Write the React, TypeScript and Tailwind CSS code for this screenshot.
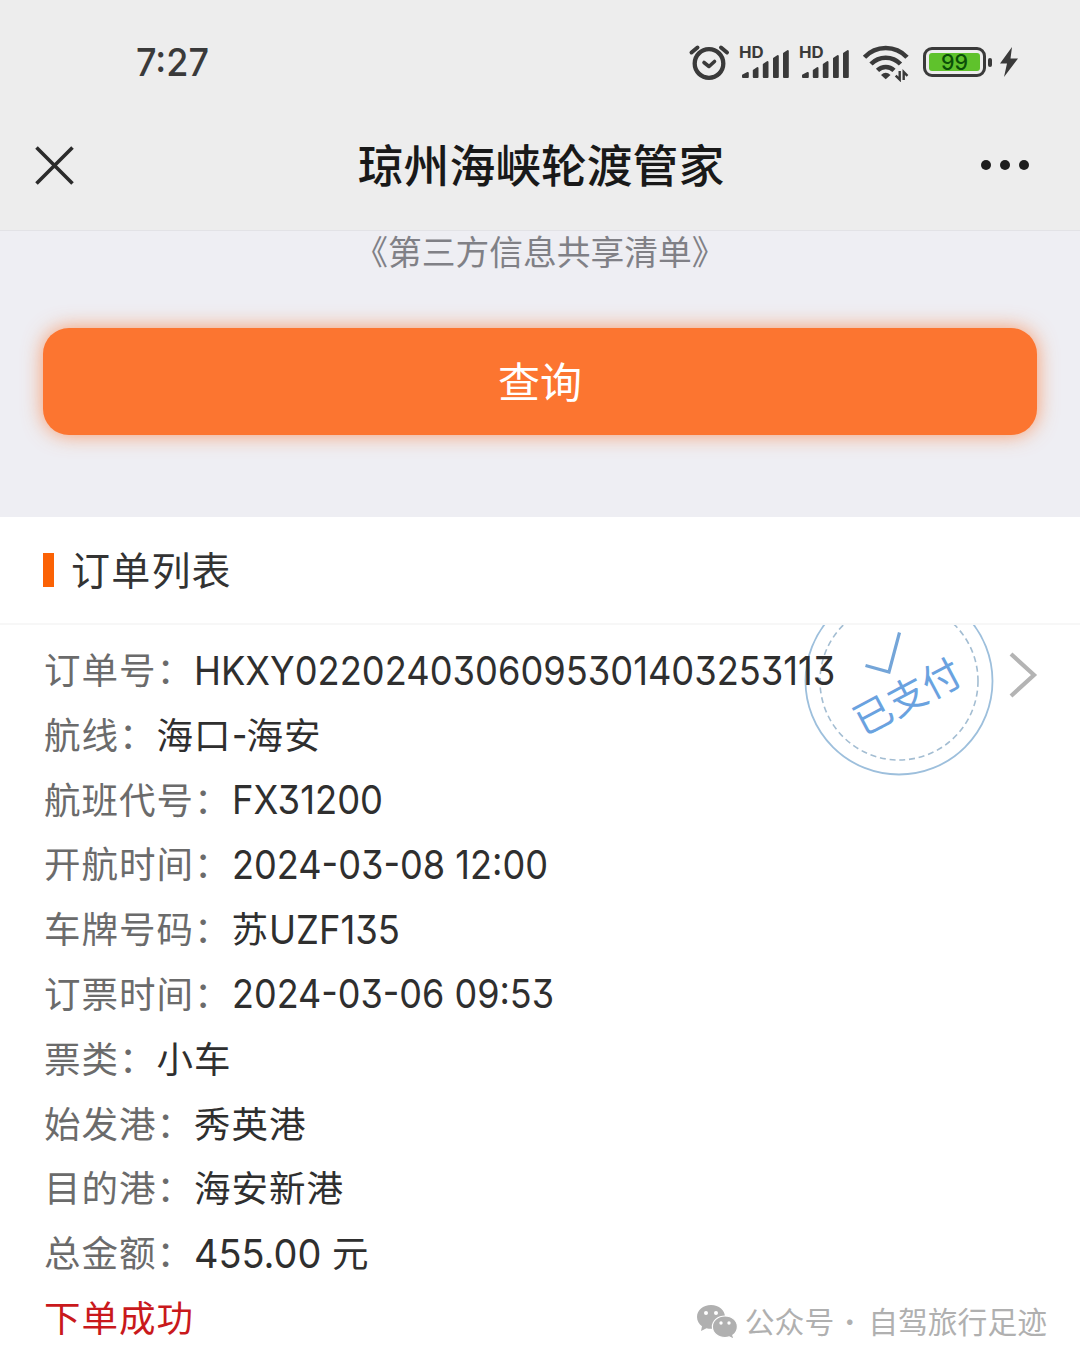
import React from "react";

const cjk = "font-['Noto_Sans_CJK_SC',sans-serif]";
const latin = "font-['Inter','Noto_Sans_CJK_SC',sans-serif] [font-feature-settings:'cv09']";

type Part = { text: string; className?: string };
type Row = { label: string; parts: Part[] };

const rows: Row[] = [
  { label: "订单号：", parts: [{ text: "HKXY0220240306095301403253113", className: "w-[641px]" }] },
  { label: "航线：", parts: [{ text: "海口" }, { text: "-", className: "w-[15px]" }, { text: "海安" }] },
  { label: "航班代号：", parts: [{ text: "FX31200", className: "w-[151px]" }] },
  { label: "开航时间：", parts: [{ text: "2024-03-08 12:00", className: "w-[316px]" }] },
  { label: "车牌号码：", parts: [{ text: "苏" }, { text: "UZF135", className: "w-[131px]" }] },
  { label: "订票时间：", parts: [{ text: "2024-03-06 09:53", className: "w-[322px]" }] },
  { label: "票类：", parts: [{ text: "小车" }] },
  { label: "始发港：", parts: [{ text: "秀英港" }] },
  { label: "目的港：", parts: [{ text: "海安新港" }] },
  { label: "总金额：", parts: [{ text: "455.00", className: "mr-[11px] w-[127px]" }, { text: "元" }] },
];

function AlarmIcon() {
  return (
    <svg width="42" height="40" viewBox="0 0 42 40" fill="none" stroke="#3a3a3a" strokeLinecap="round" strokeLinejoin="round">
      <circle cx="21" cy="21.500" r="14.300" strokeWidth="4.300" />
      <path d="M3.500 10.500 9.500 5.500M39 10.500 33 5.500" strokeWidth="4" />
      <path d="M16 20.500 21 24.500 26.500 19.500" strokeWidth="3.600" />
    </svg>
  );
}

function SignalIcon() {
  return (
    <div className="relative h-[40px] w-[52px]">
      <span className="absolute left-[1px] top-[2px] origin-left scale-x-105 font-['Inter',sans-serif] text-[16px] font-bold leading-[17px] text-[#3a3a3a]">HD</span>
      <svg className="absolute inset-0" width="52" height="40" viewBox="0 0 52 40" fill="#3a3a3a" stroke="#3a3a3a" strokeWidth="2" strokeLinejoin="round">
        <path d="M5 35V33.500L9.800 31V35Z" />
        <path d="M15.800 35V28.500L19.500 26V35Z" />
        <path d="M25.800 35V22.500L29.500 20V35Z" />
        <path d="M36 35V16.500L39.800 14V35Z" />
        <path d="M46 35V11.500L49.800 9V35Z" />
      </svg>
    </div>
  );
}

function WifiIcon() {
  return (
    <svg width="48" height="40" viewBox="0 0 48 40" fill="none" stroke="#3a3a3a" strokeWidth="4.600">
      <path d="M2.500 15.200A29 29 0 0 1 45 15.200" />
      <path d="M9 22A20.500 20.500 0 0 1 38.500 22" />
      <path d="M15.500 28.300A12 12 0 0 1 32 28.300" />
      <path d="M19 33Q23.700 28.500 28.500 33L23.700 37.300Z" fill="#3a3a3a" stroke="none" />
      <path d="M37.700 29V37.500L33.700 33.600M41.700 38V30L45.500 33.800" strokeWidth="2.400" />
    </svg>
  );
}

function Battery() {
  return (
    <div className="flex items-center">
      <div className="h-[30px] w-[63px] rounded-[9px] border-[3.500px] border-[#3a3a3a] p-[3px]">
        <div className="flex h-full items-center justify-center rounded-[3px] bg-[#5fc22c]">
          <span className="translate-y-px font-['Inter',sans-serif] text-[21.500px] font-medium leading-none text-[#0b4f08]">99</span>
        </div>
      </div>
      <div className="ml-[2px] h-[9px] w-[4px] rounded-[2px] bg-[#3a3a3a]" />
    </div>
  );
}

function PaidStamp() {
  return (
    <div className="pointer-events-none absolute left-[800px] top-0 h-[155px] w-[200px] overflow-hidden">
      <svg width="200" height="155" viewBox="800 625 200 155" fill="none">
        <circle cx="899" cy="681" r="93.500" stroke="#9dbfdc" strokeWidth="1.800" />
        <circle cx="899" cy="681" r="79" stroke="#a3bdd2" strokeWidth="1.600" strokeDasharray="6 3.800" />
        <path d="M865.500 665.500 889 672 899.500 632.500" stroke="#74a5d8" strokeWidth="3.200" />
      </svg>
      <span className={`${cjk} absolute left-[48px] top-[41px] -rotate-[28deg] whitespace-nowrap text-[38.500px] font-normal leading-[56px] text-[#6aa2df]`}>
        已支付
      </span>
    </div>
  );
}

function Latin({ text, className }: Part) {
  const ref = React.useRef<HTMLSpanElement>(null);
  const [scale, setScale] = React.useState(1);
  React.useLayoutEffect(() => {
    const el = ref.current;
    if (el && el.parentElement) setScale(el.parentElement.offsetWidth / el.offsetWidth);
  }, []);
  return (
    <span className={`inline-block translate-y-px whitespace-nowrap ${className}`}>
      <span ref={ref} className={`${latin} inline-block origin-left text-[40px] tracking-normal`} style={{ transform: `scaleX(${scale})` }}>
        {text}
      </span>
    </span>
  );
}

export default function App() {
  return (
    <div className={`${cjk} flex h-[1365px] w-[1080px] flex-col overflow-hidden bg-white`} lang="zh-CN">
      <header className="h-[231px] shrink-0 border-b border-[#e2e2e6] bg-[#ededed]">
        <div className="flex h-[124px] items-center justify-between pl-[136px] pr-[61px]">
          <span className="origin-left scale-x-[0.935] font-['Inter',sans-serif] text-[38.500px] font-medium leading-none text-[#3a3a3a]">7:27</span>
          <div className="flex items-center">
            <AlarmIcon />
            <div className="ml-[8px]"><SignalIcon /></div>
            <div className="ml-[8px]"><SignalIcon /></div>
            <div className="ml-[12px]"><WifiIcon /></div>
            <div className="ml-[13px]"><Battery /></div>
            <svg className="ml-[7px]" width="20" height="32" viewBox="0 0 20 32" fill="#3a3a3a">
              <path d="M13 1 1 17.500H8L5 31 19 12.500H11.500Z" />
            </svg>
          </div>
        </div>
        <div className="flex h-[82px] items-center justify-between pl-[34px] pr-[51px]">
          <svg width="40" height="40" viewBox="0 0 40 40" fill="none" stroke="#2b2b2b" strokeWidth="3.600">
            <path d="M2.500 2.500 38.500 38.500M38.500 2.500 2.500 38.500" />
          </svg>
          <h1 className="ml-[26px] -translate-y-px text-[45.800px] font-medium leading-none text-[#191919]">琼州海峡轮渡管家</h1>
          <div className="ml-[-1px] flex gap-[9px]">
            <i className="size-[10px] rounded-full bg-[#1e1e1e]" />
            <i className="size-[10px] rounded-full bg-[#1e1e1e]" />
            <i className="size-[10px] rounded-full bg-[#1e1e1e]" />
          </div>
        </div>
      </header>

      <section className="h-[286px] shrink-0 bg-[#eeeef3] px-[43px]">
        <p className="h-[97px] text-center text-[33.750px] leading-[39px] text-[#808086]">《第三方信息共享清单》</p>
        <button className="flex h-[107px] w-full items-center justify-center rounded-[26px] bg-[#fc7530] pb-[4px] text-[42px] text-white shadow-[0_0_20px_#fc7530b0]">
          查询
        </button>
      </section>

      <div className="flex h-[108px] shrink-0 items-center border-b-2 border-[#f7f7f7] pl-[43px]">
        <span className="h-[34px] w-[11px] bg-[#fb6205]" />
        <h2 className="ml-[17px] -translate-y-[2px] text-[39px] leading-none tracking-[1.200px] text-[#333333]">订单列表</h2>
      </div>

      <main className="relative flex-1 pl-[44px] pt-[12px]">
        <PaidStamp />
        <div className="relative">
          {rows.map((row) => (
            <div key={row.label} className="flex h-[64.800px] items-center text-[36.500px] leading-[64.800px] tracking-[1px] text-[#2f2f2f]">
              <span className="text-[#6b6b6b]">{row.label}</span>
              {row.parts.map((p, i) =>
                p.className ? <Latin key={i} {...p} /> : <span key={i}>{p.text}</span>
              )}
            </div>
          ))}
          <div className="flex h-[64.800px] items-center justify-between pr-[33px]">
            <span className="text-[36.500px] leading-[64.800px] tracking-[1px] text-[#c9191c]">下单成功</span>
            <div className="flex translate-y-[4px] items-center text-[#b0b0b0]">
              <svg className="translate-y-px" width="42" height="36" viewBox="0 0 42 36" fill="#b0b0b0">
                <path d="M15 1C7 1 1 6.200 1 13c0 4 2 7 5 9.200L5 27l5.500-2.800c1.500.4 3 .6 4.500.6 8 0 14-5.200 14-11.900S23 1 15 1Z" />
                <path d="M29 12c-7.200 0-12.600 4.700-12.600 10.700S21.800 33.500 29 33.500c1.500 0 2.900-.2 4.200-.6L38 35.200l-1.200-4c2.900-2 4.600-5.100 4.600-8.500C41.400 16.700 36.200 12 29 12Z" stroke="#fff" strokeWidth="1.200" />
                <g fill="#fff"><circle cx="10" cy="9" r="2" /><circle cx="20" cy="9" r="2" /><circle cx="25" cy="19" r="1.700" /><circle cx="33" cy="19" r="1.700" /></g>
              </svg>
              <span className="ml-[7px] text-[29.800px] leading-none">公众号</span>
              <span className="flex w-[34px] justify-center pr-[3px] text-[26px] leading-none">·</span>
              <span className="text-[29.800px] leading-none">自驾旅行足迹</span>
            </div>
          </div>
        </div>
        <svg className="absolute left-[1008px] top-[25px]" width="30" height="50" viewBox="0 0 30 50" fill="none" stroke="#b4b4b4" strokeWidth="4.200">
          <path d="M3 4 26 25 3 46" />
        </svg>
      </main>
    </div>
  );
}
